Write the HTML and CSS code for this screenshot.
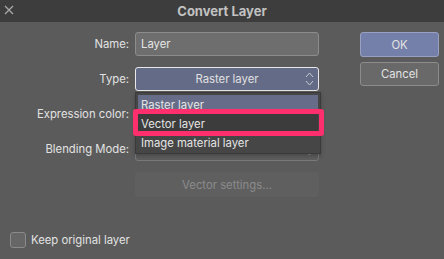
FILE: index.html
```html
<!DOCTYPE html>
<html>
<head>
    <meta charset="UTF-8">
    <title>Convert Layer</title>
    <link rel="stylesheet" href="styles.css">
</head>
<body>
    <div class="dialog">
        <div class="titlebar">
            <svg class="close" width="10" height="10" viewBox="0 0 10 10">
                <path d="M1 1 L9 9 M9 1 L1 9" stroke="#a8a8a8" stroke-width="1.3" fill="none"/>
            </svg>
            <span class="title">Convert Layer</span>
        </div>

        <div class="content">
            <div class="form">
                <label class="label">Name:</label>
                <div class="field text-input">Layer</div>

                <label class="label">Type:</label>
                <div class="field select active">
                    <span>Raster layer</span>
                    <svg class="updown" width="9" height="16" viewBox="0 0 9 16">
                        <path d="M1 6 L4.5 2 L8 6 M1 10 L4.5 14 L8 10" stroke="#c9cbd4" stroke-width="1" fill="none"/>
                    </svg>
                    <div class="menu">
                        <div class="menu-item selected">Raster layer</div>
                        <div class="menu-item hovered">Vector layer</div>
                        <div class="menu-item">Image material layer</div>
                        <div class="highlight"></div>
                    </div>
                </div>

                <label class="label">Expression color:</label>
                <div class="field select"></div>

                <label class="label">Blending Mode:</label>
                <div class="field select">
                    <svg class="updown" width="9" height="16" viewBox="0 0 9 16">
                        <path d="M1 10 L4.5 14 L8 10" stroke="#9a9a9a" stroke-width="1" fill="none"/>
                    </svg>
                </div>

                <span class="label"></span>
                <div class="field button-disabled">Vector settings...</div>
            </div>

            <div class="buttons">
                <div class="btn primary">OK</div>
                <div class="btn">Cancel</div>
            </div>
        </div>

        <div class="footer">
            <span class="checkbox"></span>
            <span class="check-label">Keep original layer</span>
        </div>
    </div>
</body>
</html>
```

FILE: styles.css
```css
* {
    margin: 0;
    padding: 0;
    box-sizing: border-box;
}

body {
    width: 444px;
    height: 259px;
    overflow: hidden;
    background-color: #5b5b5b;
    font-family: 'Inter', 'Liberation Sans', sans-serif;
    font-size: 11.3px;
    color: #e0e0e0;
}

.dialog {
    display: flex;
    flex-direction: column;
    height: 259px;
}

/* Title bar */
.titlebar {
    position: relative;
    height: 22px;
    background-color: #3d3d3d;
    display: flex;
    align-items: center;
    justify-content: center;
}

.close {
    position: absolute;
    left: 4px;
    top: 5px;
}

.title {
    font-weight: 700;
    font-size: 13px;
    color: #c2c2c2;
}

/* Main area */
.content {
    display: flex;
    padding-top: 10px;
    gap: 41px;
}

.form {
    display: grid;
    grid-template-columns: 121px 184px;
    grid-auto-rows: 24px;
    column-gap: 6px;
    row-gap: 11px;
    padding-left: 8px;
}

.label {
    display: flex;
    align-items: center;
    justify-content: flex-end;
    color: #e2e2e2;
}

.field {
    position: relative;
    display: flex;
    align-items: center;
    border-radius: 3px;
}

.text-input {
    background-color: #6e6e6e;
    border: 1px solid #8c8c8c;
    padding-left: 5px;
    color: #e6e6e6;
}

.select {
    justify-content: center;
    background-color: #5e5e5e;
    border: 1px solid #7a7a7a;
    color: #e0e0e0;
}

.select.active {
    background-color: #646b86;
    border-color: #e8e8e8;
}

.updown {
    position: absolute;
    right: 4px;
    top: 3px;
}

.button-disabled {
    justify-content: center;
    background-color: #5f5f5f;
    color: #8b8b8b;
    height: 25px;
}

/* Dropdown menu */
.menu {
    position: absolute;
    left: -1px;
    top: 24px;
    width: 186px;
    padding: 2px 2px 1px 2px;
    background-color: #464646;
    border: 1px solid #3a3a3a;
    box-shadow: 0 2px 4px rgba(0, 0, 0, 0.25);
    z-index: 5;
}

.menu-item {
    height: 19px;
    display: flex;
    align-items: center;
    padding-left: 3px;
    color: #e4e4e4;
}

.menu-item.selected {
    background-color: #676d88;
}

.menu-item.hovered {
    background-color: #3c3c3c;
}

.highlight {
    position: absolute;
    left: -3px;
    top: 16px;
    width: 191px;
    height: 27px;
    border: 5px solid #ff2e6c;
    border-radius: 3px;
}

/* Buttons */
.buttons {
    display: flex;
    flex-direction: column;
    gap: 5px;
}

.btn {
    width: 79px;
    height: 24px;
    display: flex;
    align-items: center;
    justify-content: center;
    border-radius: 3px;
    background-color: #696969;
    border: 1px solid #8c8c8c;
    color: #e2e2e2;
}

.btn.primary {
    height: 25px;
    background-color: #7580aa;
    border-color: #99a1c2;
}

/* Footer */
.footer {
    margin-top: auto;
    margin-bottom: 11px;
    padding-left: 10px;
    display: flex;
    align-items: center;
    gap: 5px;
}

.checkbox {
    width: 16px;
    height: 16px;
    border-radius: 3px;
    background-color: #666666;
    border: 1px solid #8a8a8a;
}

.check-label {
    color: #e2e2e2;
}
```
